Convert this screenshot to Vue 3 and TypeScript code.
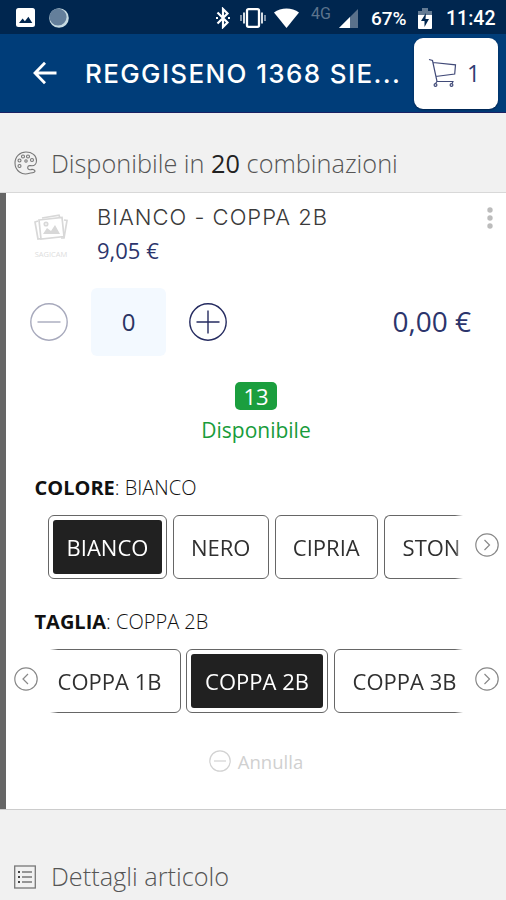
<script setup lang="ts">
import { ref, computed } from 'vue'

interface Option { label: string; width: number }

const price = 9.05
const quantity = ref(0)
const color = ref('BIANCO')
const size = ref('COPPA 2B')
const colors: Option[] = [
  { label: 'BIANCO', width: 119 },
  { label: 'NERO', width: 96.5 },
  { label: 'CIPRIA', width: 103.5 },
  { label: 'STON', width: 95 },
]
const sizes: Option[] = [
  { label: 'COPPA 1B', width: 142 },
  { label: 'COPPA 2B', width: 142 },
  { label: 'COPPA 3B', width: 142 },
]
const euro = (n: number): string => n.toFixed(2).replace('.', ',') + ' €'
const total = computed(() => euro(price * quantity.value))
const decrease = () => { if (quantity.value > 0) quantity.value-- }
</script>

<template>
  <div class="screen">
    <div class="status">
      <svg class="s-image" width="19" height="19" viewBox="0 0 19 19"><rect width="19" height="19" rx="2.5" fill="#fff" /><path d="M3 15l3.600-4.600 2.300 2.800 3.500-4.400L16.300 15z" fill="#00264f" /></svg>
      <svg class="s-moon" width="20" height="20" viewBox="0 0 20 20"><circle cx="10" cy="10" r="9.800" fill="#c7dbe2" /><circle cx="9" cy="9" r="8.600" fill="#647f9b" /></svg>
      <svg class="s-bt" width="16" height="22" viewBox="0 0 16 22"><path d="M2.500 5.500l10 10L8 20V2l4.500 4.500-10 10" fill="none" stroke="#fff" stroke-width="2.200" /><path d="M1 11h2M13 11h2" stroke="#fff" stroke-width="2" /></svg>
      <svg class="s-vib" width="26" height="20" viewBox="0 0 26 20"><rect x="7" y="1.200" width="12" height="17.600" rx="1.500" fill="none" stroke="#fff" stroke-width="2.300" /><path d="M4 4.500v11M22 4.500v11" stroke="#d7dfe6" stroke-width="2" /><path d="M1 7v6M25 7v6" stroke="#8fa0b3" stroke-width="1.800" /></svg>
      <svg class="s-wifi" width="25" height="20" viewBox="0 0 25 20"><path d="M0 4.500C7-1 18-1 25 4.500L12.500 20z" fill="#fff" /></svg>
      <span class="net">4G</span>
      <svg class="s-signal" width="19" height="19" viewBox="0 0 19 19"><path d="M19 0v19H0z" fill="#5a718b" /><path d="M11 8v11H0z" fill="#fff" /></svg>
      <span class="battery-level">67%</span>
      <svg class="s-battery" width="14" height="21" viewBox="0 0 14 21"><path d="M4 0h6v3h4v5H0V3h4z" fill="#647b94" /><path d="M0 7h14v13q0 1-1 1H1q-1 0-1-1z" fill="#fff" /><path d="M8 5L3 13h3.500v6L11 11H7.500z" fill="#00264f" /></svg>
      <span class="clock">11:42</span>
    </div>

    <header class="bar">
      <svg class="back" width="24" height="24" viewBox="0 0 24 24"><path d="M12 1.800L2 12l10 10.200M2.500 12H23.500" fill="none" stroke="#fff" stroke-width="2.800" /></svg>
      <h1>REGGISENO 1368 SIE...</h1>
      <button class="cart">
        <svg width="29" height="30" viewBox="0 0 29 30" fill="none" stroke="#414a78" stroke-width="1.200"><path d="M1 1.500l3.500 1L9 23.500H25.500M5 4.500l22.500 2.300-.8 9.200L7.500 18.500" /><circle cx="7.500" cy="27" r="1.400" /><circle cx="23.500" cy="27" r="1.400" /><path d="M9 23.500l-1.500 2M25 23.500l-1 2" /></svg>
        <span>1</span>
      </button>
    </header>

    <div class="section available">
      <svg width="24" height="24" viewBox="0 0 24 24" fill="none" stroke="#777" stroke-width="1.100"><path d="M15.500 22.200C8 25 1 19.500 1 12 1 5.500 6 1 12 1c6 0 10.500 3.500 10.500 8.500 0 3.200-2 5.300-4.500 5.300-1.500 0-2.800-.8-3.700.4-1.500 2 .2 4 2.600 3.400 2-.6 4.100.3 4.100 1.600 0 1.300-2.500 1.500-5.500 2z" /><circle cx="9" cy="5.500" r="1.500" /><circle cx="14" cy="5.500" r="1.500" /><circle cx="5.500" cy="9.500" r="1.500" /><circle cx="5.500" cy="15" r="1.500" /><circle cx="12" cy="10" r="1.200" /><circle cx="18" cy="9" r="1.500" /></svg>
      <h2>Disponibile in <b>20</b> combinazioni</h2>
    </div>

    <main class="card">
      <div class="product">
        <div class="thumb">
          <svg width="34" height="29" viewBox="0 0 34 29" fill="none" stroke="#d8d8d8" stroke-width="1.700"><path d="M4 7L1 8l3 17 3-.3M8 4L25 1.200 26 4M30 6l3 .5L30 24h-3" /><path d="M5 6l23-2.500 2 19L7 25z" /><path d="M9 20l4-6 4 3 4-6 5 9z" fill="#d8d8d8" stroke="none" /><circle cx="12" cy="10" r="1.700" /></svg>
          <span>SAGICAM</span>
        </div>
        <div class="info">
          <h3>BIANCO - COPPA 2B</h3>
          <p>{{ euro(price) }}</p>
        </div>
        <svg class="more" width="6" height="22" viewBox="0 0 6 22" fill="#bcbcbc"><circle cx="3" cy="3" r="2.700" /><circle cx="3" cy="11" r="2.700" /><circle cx="3" cy="19" r="2.700" /></svg>
      </div>

      <div class="quantity">
        <button class="round off" @click="decrease"><svg width="38" height="38" viewBox="0 0 38 38"><circle cx="19" cy="19" r="18.200" /><path d="M7.500 19h23" /></svg></button>
        <output>{{ quantity }}</output>
        <button class="round" @click="quantity++"><svg width="38" height="38" viewBox="0 0 38 38"><circle cx="19" cy="19" r="18.200" /><path d="M7.500 19h23M19 7.500v23" /></svg></button>
        <span class="total">{{ total }}</span>
      </div>

      <div class="stock">
        <span class="badge">13</span>
        <span class="stock-label">Disponibile</span>
      </div>

      <section class="choice">
        <p class="choice-label"><b>COLORE</b>: {{ color }}</p>
        <div class="carousel">
          <span class="arrow"></span>
          <div class="track">
            <button v-for="o in colors" :key="o.label" class="option" :class="{ selected: o.label === color }" :style="{ width: o.width + 'px' }" @click="color = o.label"><span>{{ o.label }}</span></button>
          </div>
          <svg class="arrow" width="24" height="24" viewBox="0 0 24 24"><circle cx="12" cy="12" r="11.200" /><path d="M9.500 7l5 5-5 5" /></svg>
        </div>
      </section>

      <section class="choice">
        <p class="choice-label"><b>TAGLIA</b>: {{ size }}</p>
        <div class="carousel">
          <svg class="arrow" width="24" height="24" viewBox="0 0 24 24"><circle cx="12" cy="12" r="11.200" /><path d="M14 7l-5 5 5 5" /></svg>
          <div class="track scrolled">
            <button v-for="o in sizes" :key="o.label" class="option" :class="{ selected: o.label === size }" :style="{ width: o.width + 'px' }" @click="size = o.label"><span>{{ o.label }}</span></button>
          </div>
          <svg class="arrow" width="24" height="24" viewBox="0 0 24 24"><circle cx="12" cy="12" r="11.200" /><path d="M9.500 7l5 5-5 5" /></svg>
        </div>
      </section>

      <button class="cancel" @click="quantity = 0">
        <svg width="22" height="22" viewBox="0 0 22 22" fill="none" stroke="#d2d2d2" stroke-width="1.200"><circle cx="11" cy="11" r="10.200" /><path d="M5 11h12" /></svg>
        <span>Annulla</span>
      </button>
    </main>

    <div class="section details">
      <svg width="22" height="24" viewBox="0 0 22 24" fill="none" stroke="#777" stroke-width="1.300"><rect x=".7" y="1" width="20.600" height="22" /><path d="M8 7h10M8 12h10M8 17h10" /><path d="M4 7h2M4 12h2M4 17h2" stroke="#444" stroke-width="2" /></svg>
      <h2>Dettagli articolo</h2>
    </div>
  </div>
</template>

<style>
body { margin: 0; background: #f1f1f1; }
</style>

<style scoped>
.screen { width: 506px; height: 900px; overflow: hidden; background: #f1f1f1; font-family: "Open Sans", sans-serif; display: flex; flex-direction: column; }
.screen * { box-sizing: border-box; }
h1, h2, h3, p { margin: 0; white-space: nowrap; }
button { font: inherit; background: none; border: 0; padding: 0; margin: 0; }
svg { display: block; flex: none; }

.status { height: 34px; flex: none; background: #00264f; color: #fff; display: flex; align-items: center; font-family: Roboto, sans-serif; padding-left: 16px; padding-top: 1px; }
.s-moon { margin-left: 14px; }
.s-bt { margin-left: 146px; }
.s-vib { margin-left: 9px; }
.s-wifi { margin-left: 8px; }
.net { width: 22px; margin: 0 0 7px 12px; font-size: 16px; line-height: 18px; color: #5d748d; }
.s-signal { margin-left: 6px; margin-top: 2px; }
.battery-level { width: 37px; margin-left: 13px; font-size: 19px; font-weight: 500; letter-spacing: -.1px; margin-top: 1px; }
.s-battery { margin-left: 10px; margin-top: 1px; }
.clock { margin-left: 14px; font-size: 19.500px; font-weight: 500; white-space: nowrap; margin-top: 1px; }

.bar { height: 79px; flex: none; background: #003d79; border-bottom: 1px solid #1b2263; display: flex; align-items: center; padding: 0 8px 0 33px; }
h1 { width: 317px; margin-left: 28px; font-family: Inter, sans-serif; font-size: 26px; font-weight: 500; letter-spacing: 1.370px; color: #fff; line-height: 40px; margin-top: 2px; }
.cart { width: 84px; height: 71px; margin-left: auto; margin-top: 0; background: #fff; border-radius: 9px; display: flex; align-items: center; padding-left: 14px; color: #303b73; font-size: 23px; box-shadow: 0 1px 2px #00224d; }
.cart span { margin-left: 10px; }

.section { display: flex; align-items: center; flex: none; color: #555; }
.section h2 { font-size: 25.300px; font-weight: 300; line-height: 36px; }
.section b { font-weight: 400; color: #222; }
.available { height: 79px; padding: 21px 0 0 14px; }
.available h2 { margin-left: 13px; }

.card { height: 618px; flex: none; border-top: 1px solid #d8d8d8; border-bottom: 1px solid #ccc; padding-left: 6px; background: linear-gradient(90deg, #666 6px, #fff 6px); display: flex; flex-direction: column; }
.product { height: 95px; display: flex; }
.thumb { width: 36px; margin: 21px 0 0 27px; display: flex; flex-direction: column; align-items: center; }
.thumb span { font-size: 7.500px; line-height: 10px; margin-top: 6px; color: #ddd; }
.info { width: 250px; margin-left: 28px; padding-top: 8px; }
h3 { font-family: Inter, sans-serif; font-size: 22px; font-weight: 300; letter-spacing: 1px; line-height: 33px; color: #3a3a3a; }
.info p { font-size: 22px; line-height: 32px; color: #2c356c; }
.more { margin: 14px 13px 0 auto; }

.quantity { height: 68px; display: flex; align-items: center; padding: 0 35px 0 24px; }
.round svg { fill: none; stroke: #252b60; stroke-width: 1.400; margin-top: -1px; }
.round.off svg { stroke: #a7a9bc; }
output { width: 75px; height: 68px; margin: 0 23px 0 23px; border-radius: 6px; background: #f3f9ff; color: #2a3463; font-size: 24px; line-height: 68px; text-align: center; }
.total { margin-left: auto; font-size: 28px; color: #2c356c; margin-top: -2px; }

.stock { height: 113px; padding-top: 26px; display: flex; flex-direction: column; align-items: center; color: #189c3b; }
.badge { width: 42px; height: 28px; border-radius: 5px; background: #1b9e3e; color: #fff; text-align: center; font-size: 22px; line-height: 28px; }
.stock-label { font-size: 21px; line-height: 30px; margin-top: 5px; }

.choice { height: 134px; flex: none; }
.choice-label { margin-left: 28.500px; font-size: 20px; line-height: 38px; font-weight: 300; color: #111; }
.choice-label b { font-weight: 700; }
.carousel { height: 64px; margin-top: 8px; display: flex; align-items: center; padding: 0 7px 0 8px; }
.arrow { width: 24px; flex: none; margin-bottom: 4px; fill: none; stroke: #888; stroke-width: 1.200; }
.track { flex: 1; min-width: 0; margin: 0 12px 0 10px; height: 64px; overflow: hidden; display: flex; gap: 5.500px; -webkit-mask: linear-gradient(90deg, #000 calc(100% - 8px), transparent); mask: linear-gradient(90deg, #000 calc(100% - 8px), transparent); }
.scrolled { -webkit-mask: linear-gradient(90deg, transparent 2px, #000 10px, #000 calc(100% - 8px), transparent); mask: linear-gradient(90deg, transparent 2px, #000 10px, #000 calc(100% - 8px), transparent); }
.scrolled .option:first-child { margin-left: -9.500px; }
.option { height: 64px; flex: none; border: 1.500px solid #666; border-radius: 6px; padding: 4px; font-size: 22px; color: #303030; }
.option span { display: flex; align-items: center; justify-content: center; height: 100%; border-radius: 3px; white-space: nowrap; padding-bottom: 1px; }
.option:nth-child(4) { border-right: 0; border-radius: 6px 0 0 6px; }
.selected span { background: #212121; color: #fff; }

.cancel { align-self: center; margin: 9px 0 0 0; display: flex; align-items: center; height: 30px; font-size: 18.500px; color: #d0d0d0; }
.cancel span { margin-left: 7px; }

.details { height: 90px; padding: 44px 0 0 14px; }
.details h2 { margin-left: 15px; margin-top: -2px; }
</style>
